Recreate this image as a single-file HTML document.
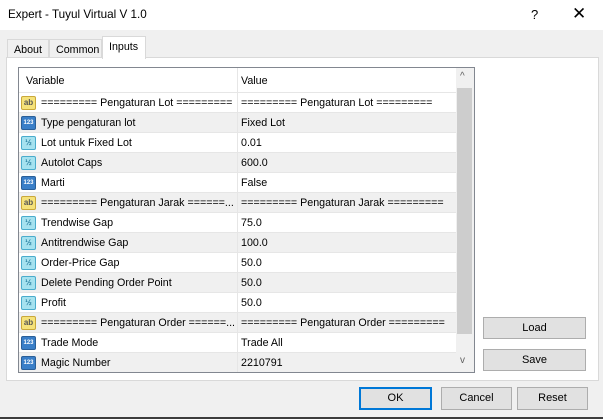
<!DOCTYPE html><html><head><style>
*{margin:0;padding:0;box-sizing:border-box}
body{width:603px;height:419px;background:#f0f0f0;font-family:"Liberation Sans",sans-serif;font-size:10.7px;color:#000;position:relative;overflow:hidden}
.a{position:absolute}
.title{left:0;top:0;width:603px;height:30px;background:#fff}
.btn{position:absolute;background:#e1e1e1;border:1px solid #adadad;text-align:center;font-size:11px}
.row{position:absolute;left:0;width:437px;height:20px;border-bottom:1px solid #e6e6e6}
.row span{position:absolute;top:4px;white-space:nowrap;overflow:hidden}
.row span.v{left:222px}
.row span.k{left:22px;width:194px;text-overflow:clip}
.ic{position:absolute;left:2px;top:3px;width:15px;height:14px;border-radius:2px;font-size:8px;line-height:12px;text-align:center;font-weight:bold;font-style:normal}
.ab{background:#f5e27a;border:1px solid #c9a83a;color:#555}
.n{background:#3a7fc8;border:1px solid #2a5f98;color:#fff;font-size:6px}
.d{background:#a6e2ef;border:1px solid #4aaccc;color:#2a7fa0;font-size:8px}
</style></head><body>
<div class="a title"></div>
<div class="a" style="left:8px;top:8px;font-size:11.7px">Expert - Tuyul Virtual V 1.0</div>
<div class="a" style="left:531px;top:7px;font-size:13px">?</div>
<div class="a" style="left:572px;top:4px;font-size:17px">✕</div>
<!-- tabs -->
<div class="a" style="left:7px;top:39px;width:42px;height:19px;border:1px solid #d9d9d9;border-bottom:none;padding:4px 0 0 6px">About</div>
<div class="a" style="left:49px;top:39px;width:53px;height:19px;border:1px solid #d9d9d9;border-bottom:none;padding:4px 0 0 6px">Common</div>
<div class="a" style="left:102px;top:36px;width:44px;height:23px;background:#fff;border:1px solid #d9d9d9;border-bottom:none;padding:4px 0 0 6px;z-index:2">Inputs</div>
<div class="a" style="left:6px;top:57px;width:593px;height:324px;background:#fff;border:1px solid #d9d9d9"></div>
<!-- list -->
<div class="a" style="left:18px;top:67px;width:457px;height:306px;border:1px solid #828790;background:#fff;overflow:hidden">
<div class="a" style="left:0;top:0;width:437px;height:25px;border-bottom:1px solid #e6e6e6"><span class="a" style="left:7px;top:7px">Variable</span><span class="a" style="left:222px;top:7px">Value</span></div>
<div class="a" style="left:218px;top:0;width:1px;height:306px;background:#e6e6e6;z-index:3"></div>
<div class="a" style="left:0;top:25px;width:437px">
<div class="row" style="top:0;background:#fff"><i class="ic ab">ab</i><span class="k">========= Pengaturan Lot =========</span><span class="v">========= Pengaturan Lot =========</span></div>
<div class="row" style="top:20px;background:#f0f0f0"><i class="ic n">123</i><span class="k">Type pengaturan lot</span><span class="v">Fixed Lot</span></div>
<div class="row" style="top:40px;background:#fff"><i class="ic d">½</i><span class="k">Lot untuk Fixed Lot</span><span class="v">0.01</span></div>
<div class="row" style="top:60px;background:#f0f0f0"><i class="ic d">½</i><span class="k">Autolot Caps</span><span class="v">600.0</span></div>
<div class="row" style="top:80px;background:#fff"><i class="ic n">123</i><span class="k">Marti</span><span class="v">False</span></div>
<div class="row" style="top:100px;background:#f0f0f0"><i class="ic ab">ab</i><span class="k">========= Pengaturan Jarak ======...</span><span class="v">========= Pengaturan Jarak =========</span></div>
<div class="row" style="top:120px;background:#fff"><i class="ic d">½</i><span class="k">Trendwise Gap</span><span class="v">75.0</span></div>
<div class="row" style="top:140px;background:#f0f0f0"><i class="ic d">½</i><span class="k">Antitrendwise Gap</span><span class="v">100.0</span></div>
<div class="row" style="top:160px;background:#fff"><i class="ic d">½</i><span class="k">Order-Price Gap</span><span class="v">50.0</span></div>
<div class="row" style="top:180px;background:#f0f0f0"><i class="ic d">½</i><span class="k">Delete Pending Order Point</span><span class="v">50.0</span></div>
<div class="row" style="top:200px;background:#fff"><i class="ic d">½</i><span class="k">Profit</span><span class="v">50.0</span></div>
<div class="row" style="top:220px;background:#f0f0f0"><i class="ic ab">ab</i><span class="k">========= Pengaturan Order ======...</span><span class="v">========= Pengaturan Order =========</span></div>
<div class="row" style="top:240px;background:#fff"><i class="ic n">123</i><span class="k">Trade Mode</span><span class="v">Trade All</span></div>
<div class="row" style="top:260px;background:#f0f0f0"><i class="ic n">123</i><span class="k">Magic Number</span><span class="v">2210791</span></div>
</div>
<div class="a" style="left:437px;top:0;width:18px;height:306px;background:#f0f0f0">
<div class="a" style="left:1px;top:20px;width:15px;height:246px;background:#cdcdcd"></div>
<div class="a" style="left:4px;top:3px;font-size:10px;color:#606060">^</div>
<div class="a" style="left:4px;top:287px;font-size:10px;color:#606060">v</div>
</div>
</div>
<div class="btn" style="left:483px;top:317px;width:103px;height:22px;line-height:20px">Load</div>
<div class="btn" style="left:483px;top:349px;width:103px;height:22px;line-height:20px">Save</div>
<div class="btn" style="left:359px;top:387px;width:73px;height:23px;line-height:19px;border:2px solid #0078d7">OK</div>
<div class="btn" style="left:441px;top:387px;width:71px;height:23px;line-height:21px">Cancel</div>
<div class="btn" style="left:517px;top:387px;width:71px;height:23px;line-height:21px">Reset</div>
<div class="a" style="left:0;top:417px;width:603px;height:2px;background:#3c3c3c"></div>
</body></html>
